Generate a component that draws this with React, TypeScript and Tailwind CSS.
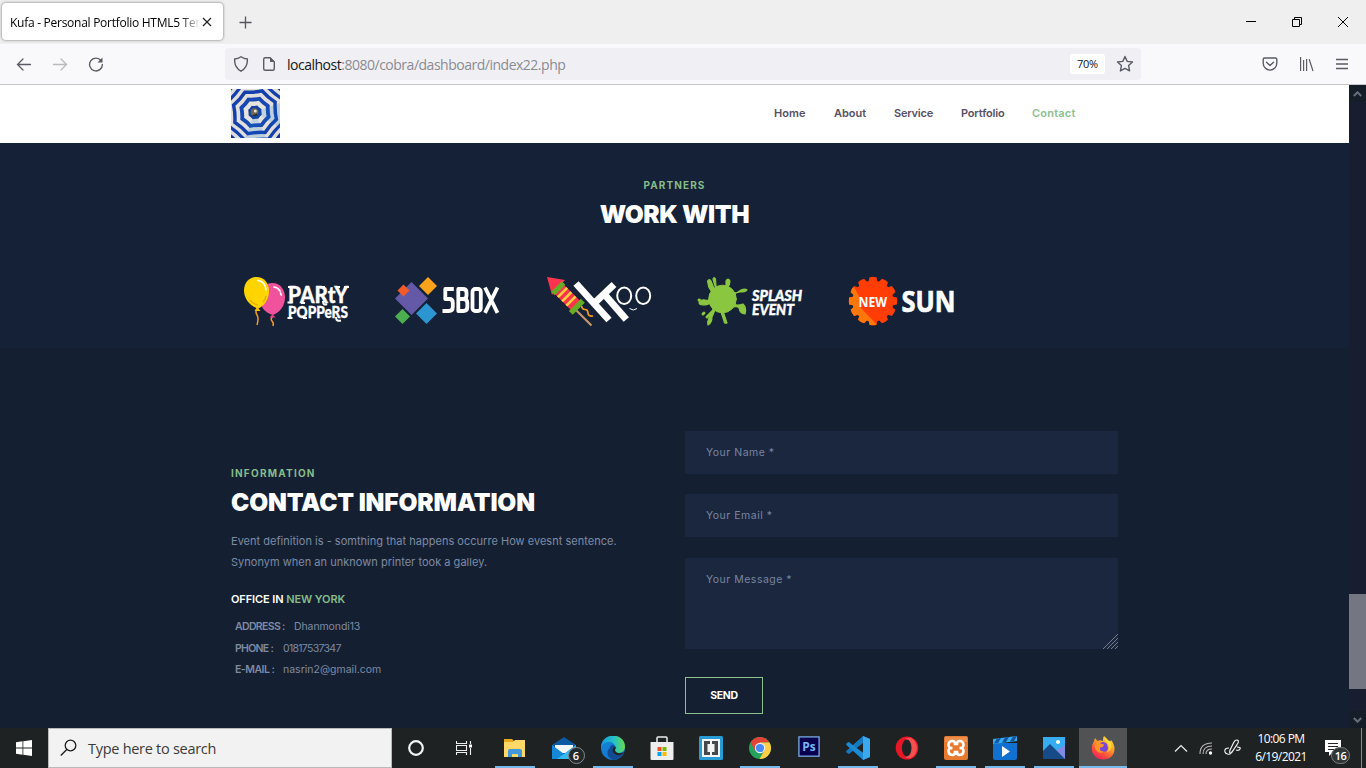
import React from "react";

const SEGOE = "font-['Open_Sans','Noto_Sans',sans-serif]";
const range = (n: number) => Array.from({ length: n }, (_, i) => i);

function Umbrella() {
  const ring = (r: number) => {
    const pts = range(8).map((i) => {
      const a = (i * Math.PI) / 4 + 0.32;
      return [24 + r * Math.cos(a), 23.3 + r * Math.sin(a)];
    });
    let d = `M${pts[0][0]} ${pts[0][1]}`;
    range(8).forEach((i) => {
      const a = ((i + 0.5) * Math.PI) / 4 + 0.32;
      const n = pts[(i + 1) % 8];
      d += `Q${24 + r * 0.87 * Math.cos(a)} ${23.3 + r * 0.87 * Math.sin(a)} ${n[0]} ${n[1]}`;
    });
    return d + "Z";
  };
  const rings: [number, string][] = [
    [36, "#dddddd"], [32, "#1440ae"], [28.3, "#e0dfdc"], [24.5, "#1440ae"], [20.6, "#e2e0dc"],
    [16.5, "#1749b4"], [12.2, "#e6e4df"], [7.2, "#16419c"],
  ];
  return (
    <svg width="49" height="49" viewBox="0 0 49 49" className="mb-[2px] block">
      <rect width="49" height="49" fill="#12369f" />
      {rings.map(([r, c], i) => (
        <path key={i} d={ring(r)} fill={c} />
      ))}
      <path d="M24 23L49 14V39ZM24 23L35 49H14Z" fill="#0879dc" opacity=".16" />
      <circle cx="23.5" cy="23" r="3.8" fill="#6d6857" />
      <circle cx="24.3" cy="22" r="1.5" fill="#eee4c8" />
      <path d="M22 26q2 1 4-1" stroke="#29241e" strokeWidth="1.3" fill="none" />
    </svg>
  );
}

function PartyLogo() {
  return (
    <svg width="108" height="50" viewBox="0 0 108 50" className="overflow-visible">
      <path d="M13 31q-2 4 0 7t0 10M29 39q-3 3-1 5t1 5" fill="none" stroke="#f79a1c" strokeWidth="1.5" />
      <path d="M28.500 6c7 0 12.500 6 12.500 14.500 0 8-5 15-12 17.500-8-2-13-8-13-17C16 12 21 6 28.500 6Z" fill="#f0529c" />
      <path d="m28.500 37-3 3.500h6z" fill="#e33b8b" />
      <path d="M12.500 0C20 0 25 6 25 14c0 9-5 15-11 17.500C6 29 0 22 0 13.500 0 6 5 0 12.500 0Z" fill="#ffd400" />
      <path d="m13.500 30-3 4h6z" fill="#f4b900" />
      <path d="M6 23q3 4 8 5M19 25q2-2 3-6" stroke="#e9ae00" strokeWidth="1.3" fill="none" />
      <path d="M14 3.500q5 .5 7 5.500M21.500 10.500l.5 2M30 10q4 .5 6 4M36.500 16l.7 2" stroke="#fff" strokeWidth="1.7" fill="none" strokeLinecap="round" />
      <g fill="#fff" stroke="#fff" strokeWidth=".3" fontFamily="Lato, sans-serif" fontWeight="900">
        <text x="44" y="25.500" fontSize="22" textLength="60" lengthAdjust="spacingAndGlyphs">PARtY</text>
        <text x="44" y="41" fontSize="16" textLength="60" lengthAdjust="spacingAndGlyphs">POPPeRS</text>
        <path d="M44 10h4M43.500 25.500h5M57 26h4M76 10h5M92 10h4M100 10h5M43.500 41h5M59 41h4" fill="none" strokeWidth="1.800" />
        <path d="M79 24q0 5 4 3M92 40q0 5 5 3.500" fill="none" strokeWidth="2" />
      </g>
    </svg>
  );
}

function BoxLogo() {
  return (
    <svg width="106" height="50" viewBox="0 0 106 50">
      <path d="M16.500 5 33 21.500 16.500 38 0 21.500Z" fill="#6459a6" />
      <path d="m8.500 7.500 6 6-6 6-6-6Z" fill="#f15a29" />
      <path d="m33 0 9 9-9 9-9-9Z" fill="#faa21b" />
      <path d="m7.500 32 7.500 7.500L7.500 47 0 39.500Z" fill="#4bae4f" />
      <path d="m31.500 26 10.500 10.500L31.500 47 21 36.500Z" fill="#2b96d1" />
      <g fill="none" stroke="#fff" strokeWidth="3.8" strokeLinejoin="round">
        <path d="M58.800 12h-8.500v10h4q3.500 0 3.500 4v4q0 4-4 4h-6.300" />
        <path d="M63.300 12h4.500q3.700 0 3.700 3.500v3q0 3.500-3.700 3.500h-4.500V12v22h5q4 0 4-4v-4q0-4-4-4" />
        <rect x="77.500" y="12" width="8.300" height="22" rx="2.700" />
        <path d="m90 10.500 12.500 25.300M102.500 10.500 90 35.800" />
      </g>
    </svg>
  );
}

function RocketLogo() {
  return (
    <svg width="106" height="50" viewBox="0 0 106 50">
      <path d="m29 33 15.500 15.500" stroke="#c2966a" strokeWidth="2.2" />
      <path d="M0 0 18 3 5 18Z" fill="#ff334d" />
      <g transform="translate(9.500 9.500) rotate(45)">
        <rect y="-6.500" width="30" height="13" fill="#ff334d" />
        <rect y="-7.500" width="5" height="15" fill="#65ad24" />
        <rect x="26" y="-8.500" width="5.500" height="17" fill="#65ad24" />
        <path d="M8.500-6.500v13M14.500-6.500v13M20.500-6.500v13" stroke="#ffd43a" strokeWidth="2.600" />
      </g>
      <g fill="none" stroke="#fff" strokeWidth="7">
        <path d="M29 6.500 62 43" />
        <path d="M67 7.500 47.500 26" />
        <path d="M58 18 79.300 42.500" />
      </g>
      <path d="M34.500 29q.5 3.500 3.500 3.500t3 3.500 5 3" stroke="#f39a1e" strokeWidth="1.700" fill="none" />
      <g fill="none" stroke="#fff">
        <ellipse cx="77.200" cy="18.800" rx="7" ry="8.300" strokeWidth="2" />
        <ellipse cx="96.200" cy="18.800" rx="7" ry="8.300" strokeWidth="2" />
        <path d="M82.500 31.500q4 3 7.500 0" strokeWidth="1" />
      </g>
    </svg>
  );
}

function SplashLogo() {
  return (
    <svg width="108" height="50" viewBox="0 0 108 50" className="overflow-visible">
      <g fill="#8ac640" stroke="#8ac640" strokeLinecap="round" strokeLinejoin="round">
        <circle cx="24.500" cy="22" r="13.800" />
        <path d="M13 14q-3-4-3.500-10 2-3 3.500 0l4 10ZM17 9 15 2q1-3 2.500 0l.5 8ZM28 11l0-7q2-4 4 0 0 4-3 8ZM36 16q4 0 7-3 4-2 6 0-2 2-7 2-4 0-6 3ZM36 27q3 2 9 0 4 4 2 10-5 0-6-6-1-2-6-1ZM25 34l4 12q-3 1-3-2l-3-9ZM17 33l-3 7q0 6-4 8-1-3 1-7l4-9ZM13 25q-3 3-8 3-4 0-4-3 3-3 6-2 3 1 6-1Z" strokeWidth="1.200" />
        <path d="m14 35-5 5M1 23h.5M6 36l-1 1" strokeWidth="3" />
      </g>
      <g fill="#fff" stroke="#fff" strokeWidth=".4" fontFamily="Lato, sans-serif" fontWeight="900" fontStyle="italic">
        <text x="54" y="23.500" fontSize="14.500" textLength="50" lengthAdjust="spacingAndGlyphs">SPLASH</text>
        <text x="54" y="38" fontSize="15" textLength="42" lengthAdjust="spacingAndGlyphs">EVENT</text>
      </g>
    </svg>
  );
}

function SunLogo() {
  const c = 24;
  const teeth = (
    <>
      <circle cx={c} cy={c} r="20.500" />
      {range(12).map((i) => (
        <path key={i} transform={`rotate(${i * 30} ${c} ${c})`} d="M19.500 5 20.500 .2Q24-.8 27.500 .2L28.500 5Z" />
      ))}
    </>
  );
  return (
    <svg width="108" height="50" viewBox="0 0 108 50" className="overflow-visible">
      <defs>
        <clipPath id="gear-shadow"><path d="M0 8 4 9 10 19V29L28 48V50H0Z" /></clipPath>
      </defs>
      <g fill="#ff3d05">{teeth}</g>
      <g fill="#ff7708" clipPath="url(#gear-shadow)">{teeth}</g>
      <text x="9.500" y="29.500" fill="#fff" fontFamily="Open Sans, sans-serif" fontWeight="700" fontSize="14.500" textLength="28.500" lengthAdjust="spacingAndGlyphs">NEW</text>
      <text x="52.500" y="34.500" fill="#fff" stroke="#fff" strokeWidth=".7" fontFamily="Open Sans, sans-serif" fontWeight="700" fontSize="28.500" textLength="54" lengthAdjust="spacingAndGlyphs">SUN</text>
    </svg>
  );
}

const Ico = ({ children, w = 24, className = "" }: { children: React.ReactNode; w?: number; className?: string }) => (
  <svg width={w} height={w} viewBox="0 0 24 24" fill="none" className={`block shrink-0 ${className}`}>
    {children}
  </svg>
);

function BrowserChrome() {
  return (
    <div className={`${SEGOE} shrink-0`}>
      <div className="flex h-11 items-start bg-[#efefef]">
        <div className="ml-0.5 mt-[3px] flex h-[37px] w-[221px] items-center rounded-[4px] bg-white pl-2 shadow-[0_0_3px_rgba(0,0,0,0.55)]">
          <span className="w-[190px] overflow-hidden whitespace-nowrap bg-linear-to-r from-black from-88% to-[#ffffff] bg-clip-text pt-[2px] text-[12px] tracking-[-0.27px] text-transparent">
            Kufa - Personal Portfolio HTML5 Template
          </span>
          <svg width="12" height="12" viewBox="0 0 12 12" className="ml-[1px]" stroke="#222" strokeWidth="1.2"><path d="m2 2 8 8m0-8-8 8" /></svg>
        </div>
        <svg width="14" height="14" viewBox="0 0 14 14" className="ml-[15px] mt-[15px]" stroke="#55555c" strokeWidth="1.3"><path d="M7.500 1.500v12M1.500 7.500h12" /></svg>
        <div className="ml-auto mr-[17px] mt-[16px] flex gap-[34px]">
          <svg width="12" height="12" viewBox="0 0 12 12" stroke="#000"><path d="M1 5.500h10" /></svg>
          <svg width="12" height="12" viewBox="0 0 12 12" stroke="#000" fill="none"><path d="M1.500 3.500h7v7h-7zM3.500 3.500v-2h7v7h-2" /></svg>
          <svg width="12" height="12" viewBox="0 0 12 12" stroke="#000"><path d="m1 1 10 10M11 1 1 11" /></svg>
        </div>
      </div>
      <div className="flex h-[41px] items-center border-b border-[#c6c6ca] bg-[#f9f9fb] text-[#5b5b66]">
        <svg width="16" height="16" viewBox="0 0 16 16" className="ml-4" fill="none" stroke="#5b5b66" strokeWidth="1.3" strokeLinecap="round"><path d="M14.500 8.500H1.500m5.500-5.500L1.500 8.500 7 14" /></svg>
        <svg width="16" height="16" viewBox="0 0 16 16" className="ml-5" fill="none" stroke="#b9b9bf" strokeWidth="1.3" strokeLinecap="round"><path d="M1.500 8.500h13m-5.500-5.500L14.500 8.500 9 14" /></svg>
        <svg width="16" height="16" viewBox="0 0 16 16" className="ml-5" fill="none" stroke="#5b5b66" strokeWidth="1.4"><path d="M13 4.500a6.400 6.400 0 1 0 1.400 4" strokeLinecap="round" /><path d="M14.500 1.500v5h-5Z" fill="#5b5b66" stroke="none" /></svg>
        <div className="ml-[121px] flex h-8 w-[916px] items-center rounded-[4px] bg-[#f0f0f4]">
          <svg width="16" height="16" viewBox="0 0 16 16" className="ml-2" fill="none" stroke="#5b5b66" strokeWidth="1.400"><path d="M8 .8Q11 3 14.300 3 15 11 8 15.200 1 11 1.700 3 5 3 8 .8Z" /></svg>
          <svg width="14" height="16" viewBox="0 0 14 16" className="ml-[13px]" fill="none" stroke="#5b5b66" strokeWidth="1.400"><path d="M8 1.700H3.200Q1.700 1.700 1.700 3.200v9.600q0 1.500 1.500 1.500h7.600q1.500 0 1.500-1.500V6Z" /><path d="M8 1v5h5Z" fill="#5b5b66" stroke="none" /></svg>
          <span className="ml-[11px] pt-px text-[14px] tracking-[-0.49px] text-[#8b8b92]"><span className="text-[#15141a]">localhost</span>:8080/cobra/dashboard/index22.php</span>
          <span className="ml-auto flex h-5 w-[35px] items-center justify-center rounded-[3px] bg-white pt-px text-[11px] tracking-[-0.3px] text-[#15141a]">70%</span>
          <svg width="18" height="18" viewBox="0 0 18 18" className="ml-[11px] mr-[7px]" fill="none" stroke="#5b5b66" strokeWidth="1.400" strokeLinejoin="round"><path d="m9 1.500 2.200 4.900 5.300.6-3.900 3.600 1 5.300L9 13.300l-4.600 2.600 1-5.300L1.500 7l5.300-.6Z" /></svg>
        </div>
        <svg width="16" height="16" viewBox="0 0 16 16" className="ml-[121px]" fill="none" stroke="#5b5b66" strokeWidth="1.400" strokeLinecap="round" strokeLinejoin="round"><path d="M2.500 2h11q1.300 0 1.300 1.300v4a6.800 6.800 0 0 1-13.600 0v-4Q1.200 2 2.500 2ZM4.500 6.200 8 9.500l3.500-3.300" /></svg>
        <svg width="16" height="16" viewBox="0 0 16 16" className="ml-[21px]" stroke="#5b5b66" strokeWidth="1.200"><path d="M1.600 1v14M4.600 4v11M7.600 3v12M10.200 3.200 14 15" /></svg>
        <svg width="16" height="16" viewBox="0 0 16 16" className="ml-[19px]" stroke="#5b5b66" strokeWidth="1.300"><path d="M2 3.500h12M2 8h12M2 12.500h12" /></svg>
      </div>
    </div>
  );
}

const partners: [string, React.ReactNode][] = [
  ["w-[151px]", <PartyLogo />],
  ["w-[152px]", <BoxLogo />],
  ["w-[151px]", <RocketLogo />],
  ["w-[151px]", <SplashLogo />],
  ["w-[151px]", <SunLogo />],
];

function Page() {
  return (
    <div className="flex w-[1349px] flex-col bg-[#142032] font-['Inter',sans-serif]">
      <header className="flex h-[58px] shrink-0 items-center bg-white pl-[231px] text-[11px] font-semibold leading-none text-[#565064]">
        <Umbrella />
        <nav className="mb-[2px] ml-[494px] flex">
          <a className="w-[60px] tracking-[0.1px]">Home</a>
          <a className="w-[60px] tracking-[0px]">About</a>
          <a className="w-[67px] tracking-[-0.2px]">Service</a>
          <a className="w-[71px] tracking-[-0.17px]">Portfolio</a>
          <a className="tracking-[0.2px] text-[#8cc090]">Contact</a>
        </nav>
      </header>
      <section className="h-[205px] shrink-0 bg-[#152136] pt-[35px]">
        <p className="text-center text-[10px] font-bold leading-[14px] tracking-[1.1px] text-[#86bb8a]">PARTNERS</p>
        <h2 className="mt-[7px] text-center text-[24.5px] font-black leading-[30px] tracking-[-0.4px] text-white">WORK WITH</h2>
        <div className="ml-[244px] mt-[48px] flex">
          {partners.map(([w, logo], i) => (
            <div key={i} className={w}>{logo}</div>
          ))}
        </div>
      </section>
      <section className="flex flex-1 pl-[231px]">
        <div className="w-[454px] pt-[118px]">
          <p className="text-[10px] font-bold leading-[14px] tracking-[1.22px] text-[#86bb8a]">INFORMATION</p>
          <h2 className="mt-[7px] whitespace-nowrap text-[24.5px] font-black leading-[30px] tracking-[-0.17px] text-white">CONTACT INFORMATION</h2>
          <p className="mt-[14px] whitespace-nowrap text-[11px] leading-[21px] tracking-[0.02px] text-[#7e8aa2]">
            Event definition is - somthing that happens occurre How evesnt sentence.<br />
            Synonym when an unknown printer took a galley.
          </p>
          <h5 className="mt-[18px] text-[11px] font-semibold leading-[16px] tracking-[-0.1px] text-white">OFFICE IN <span className="text-[#86bb8a]">NEW YORK</span></h5>
          <ul className="ml-1 mt-[9px] text-[10.5px] leading-[21.5px] tracking-[-0.1px] text-[#7e8aa2]">
            <li className="flex"><b className="w-[59px] font-semibold tracking-[-0.65px]">ADDRESS :</b>Dhanmondi13</li>
            <li className="flex tracking-[-0.7px]"><b className="w-[48px] font-semibold">PHONE :</b>01817537347</li>
            <li className="flex tracking-[0px]"><b className="w-[48px] font-semibold tracking-[-0.5px]">E-MAIL :</b>nasrin2@gmail.com</li>
          </ul>
        </div>
        <form className="flex w-[433px] flex-col pt-[83px] text-[10.5px] tracking-[0.5px]">
          <input placeholder="Your Name *" className="h-[43px] bg-[#1a273e] px-[21px] text-white placeholder:text-[#7985a0]" />
          <input placeholder="Your Email *" className="mt-5 h-[43px] bg-[#1a273e] px-[21px] text-white placeholder:text-[#7985a0]" />
          <div className="relative mt-[21px] h-[91px]">
            <textarea placeholder="Your Message *" className="block h-full w-full resize-none bg-[#1a273e] px-[21px] py-[14px] leading-[16px] text-white placeholder:text-[#7985a0]" />
            <svg width="15" height="15" viewBox="0 0 15 15" className="absolute bottom-0 right-0" stroke="#8d929c" strokeWidth=".8"><path d="M0 15 15 0M4 15 15 4M8 15l7-7M12 15l3-3" /></svg>
          </div>
          <button type="button" className="mt-[28px] h-[37px] w-[78px] border border-[#8cc090] text-[10.5px] font-bold tracking-[-0.35px] text-white">SEND</button>
        </form>
      </section>
    </div>
  );
}

function ScrollBar() {
  return (
    <div className="flex w-[17px] flex-col items-center bg-[#181d30]">
      <div className="flex h-[17px] w-full items-center justify-center bg-[#151d29]"><svg width="9" height="6" viewBox="0 0 9 6" fill="none" stroke="#686e78" strokeWidth="2"><path d="m.8 5 3.700-3.700L8.200 5" /></svg></div>
      <div className="mt-[492px] h-[95px] w-full bg-[#747681]" />
      <div className="mt-auto flex h-[17px] w-full items-center justify-center bg-[#151d29]"><svg width="9" height="6" viewBox="0 0 9 6" fill="none" stroke="#686e78" strokeWidth="2"><path d="M.8 1 4.500 4.700 8.200 1" /></svg></div>
    </div>
  );
}

const Explorer = () => (
  <Ico><path d="M1 3h8l2 2h11v16H1Z" fill="#e9a91c" /><path d="M1 6h9l2-2h10v17H1Z" fill="#ffd867" /><path d="M5 21v-6q0-2 2-2h10q2 0 2 2v6h-4v-3H9v3Z" fill="#4398dc" /></Ico>
);
const Mail = () => (
  <div className="relative">
    <Ico><path d="M0 9 12 1l12 8v14H0Z" fill="#0c59a4" /><path d="M3 9h18v8H3Z" fill="#f2f6f9" /><path d="m0 9 12 9 12-9v14H0Z" fill="#1688d8" /><path d="m12 18 12-9v14H5Z" fill="#35b9f2" /></Ico>
    <span className="absolute -right-[9px] top-[11px] flex h-[17px] w-[17px] items-center justify-center rounded-full border border-[#858b8e] bg-[#22292d] text-[11px] font-semibold leading-none text-white">6</span>
  </div>
);
const Edge = () => (
  <Ico>
    <defs>
      <linearGradient id="edge-a" x2="1"><stop stopColor="#1598df" /><stop offset=".55" stopColor="#24c3c6" /><stop offset="1" stopColor="#6ad84a" /></linearGradient>
      <linearGradient id="edge-b" y2="1"><stop stopColor="#1686d8" /><stop offset="1" stopColor="#1170c6" /></linearGradient>
    </defs>
    <circle cx="12" cy="12" r="12" fill="url(#edge-b)" />
    <path d="M0 11C1-4 23-4 24 10c0 5-3 7-7 7-5 0-3-3-2-4C14 4 4 4 0 11Z" fill="url(#edge-a)" />
    <path d="M9 12c0-3 3-4 5-2-1 1-2 3-1 5 2 3 7 3 10 1-2 5-6 8-11 8-5-2-8-8-3-12Z" fill="#124b91" />
    <path d="M15 11q-3 4 2 6c4 1 7-1 7-3-2 7-10 6-12 2-1-3 1-6 3-5Z" fill="#202326" />
  </Ico>
);
const Store = () => (
  <Ico><path d="M7 6V2q0-1 1-1h8q1 0 1 1v4" stroke="#eee" strokeWidth="1.500" /><path d="M.5 6h23v17q0 1-1 1h-21q-1 0-1-1Z" fill="#eee" /><path d="M7.500 11h4v4h-4Z" fill="#f25022" /><path d="M12.500 11h4v4h-4Z" fill="#7fba00" /><path d="M7.500 16h4v4h-4Z" fill="#00a4ef" /><path d="M12.500 16h4v4h-4Z" fill="#ffb900" /></Ico>
);
const Brackets = () => (
  <Ico><rect width="24" height="24" rx="1.500" fill="#279bd4" /><rect x="3" y="3" width="18" height="18" fill="#f3f5f5" /><path d="M11 5H5v14h6v-3H8.500V8H11ZM13 5h6v14h-6v-3h2.500V8H13Z" fill="#45494b" /></Ico>
);
const Chrome = () => (
  <Ico><circle cx="12" cy="12" r="11" fill="#22a45d" /><path d="M2.500 6.500a11 11 0 0 1 19 0H12L7.200 15Z" fill="#e34337" /><path d="M12 6.500h9.500A11 11 0 0 1 11.500 23l5-8.500Z" fill="#fecf43" /><circle cx="12" cy="12" r="5.200" fill="#f2f2f2" /><circle cx="12" cy="12" r="4.100" fill="#4889f4" /></Ico>
);
const Photoshop = () => (
  <Ico w={22} className="mb-[3px]"><rect x="1" y="1" width="22" height="21" fill="#08004e" stroke="#7baeea" strokeWidth="1.400" /><text x="12" y="16" textAnchor="middle" fontSize="13" fontWeight="700" fontFamily="Open Sans, sans-serif" fill="#74b7f4">Ps</text></Ico>
);
const Code = () => (
  <Ico>
    <path d="M17 0 24 3v18l-7 3L.5 9q-.8-1 0-1.800L2.500 6 17 17V7L3 18 .5 16.500q-.8-1 0-1.800Z" fill="#1479c0" />
    <path d="M.5 9 2.500 6 18 17.500V24Z" fill="#1c8ad4" />
    <path d="m17 0 7 3v18l-7 3Z" fill="#3aa9ee" />
  </Ico>
);
const Opera = () => (
  <Ico><ellipse cx="12" cy="12" rx="11.300" ry="11.500" fill="#e81727" /><path d="M16 2a11.400 11.400 0 0 1 0 20q-4 1-6-1 6-1 6-9t-6-9q3-2 6-1Z" fill="#f55050" /><ellipse cx="11.700" cy="12" rx="4.800" ry="8.500" fill="#202326" /></Ico>
);
const Xampp = () => (
  <Ico><rect width="24" height="24" rx="2" fill="#e77a2f" /><path d="M1 1h22v5H1Z" fill="#f5a467" opacity=".5" /><path d="M8.500 12Q4 12 4.500 8.500t4-3.500Q11 5 11 8h2q0-3 2.500-3 3.500 0 4 3.500T15.500 12q4.500 0 4 3.500t-4 3.500q-2.500 0-2.500-3h-2q0 3-2.500 3-3.500 0-4-3.500T8.500 12Z" stroke="#fff" strokeWidth="2.600" /></Ico>
);
const Movies = () => (
  <Ico><path d="M0 7h24v15q0 2-2 2H2q-2 0-2-2Z" fill="#1271d0" /><path d="M0 3 24 0v5L0 8Z" fill="#37aaf1" /><path d="m4 2.500 4-.5-3 5-4 .5ZM12 1.500l4-.5-3 5-4 .5ZM20 .500l4-.5-3 5-4 .5Z" fill="#1156a1" /><path d="m9 10 8 5.500L9 21Z" fill="#fff" /></Ico>
);
const Photos = () => (
  <Ico><path d="M1 1h22v22H1Z" fill="#35adf0" /><path d="M13 15 23 9v14H13Z" fill="#818be2" /><path d="M1 15 8 8l15 15H1Z" fill="#174b88" /><circle cx="16" cy="6" r="2" fill="#fff" /></Ico>
);
const Firefox = () => (
  <Ico>
    <defs><linearGradient id="fox" x1=".8" y1="0" x2=".2" y2="1"><stop stopColor="#ffe13e" /><stop offset=".4" stopColor="#ff9b2c" /><stop offset=".75" stopColor="#ff463d" /><stop offset="1" stopColor="#ed1a70" /></linearGradient></defs>
    <path d="M13 0q4 3 5 6 2-1 2-2 3.500 4 3.500 9c0 6.500-5 10.500-11.500 10.500S.8 18.500.8 12.500q0-4 2-7L4 2l2.500 3Q9 3.500 12 5q-.5-3 1-5Z" fill="url(#fox)" />
    <path d="M8 8q4-4 8 0 3 8-4 8-5 0-5-5 4 1 5-1Z" fill="#7747d8" />
    <path d="M4.500 6q3-1 5 1.500l3.500 1q0 2.500-4 3-1 4 4 4c-4 3-9 0-9-5Z" fill="#ff9326" />
    <path d="M13.500 1q.5 4 3 6 3 5-.5 9.500 7-3.500 3-11.500-4-1-5.500-4Z" fill="#ffdb38" />
  </Ico>
);

const apps: [() => React.JSX.Element, boolean][] = [
  [Explorer, true], [Mail, false], [Edge, true], [Store, false], [Brackets, false], [Chrome, true], [Photoshop, false],
  [Code, true], [Opera, false], [Xampp, true], [Movies, true], [Photos, true],
];

function Taskbar() {
  return (
    <div className={`${SEGOE} flex h-10 shrink-0 bg-[#1f2222]`}>
      <div className="flex w-12 items-center justify-center">
        <svg width="16" height="16" viewBox="0 0 16 16" fill="#fff"><path d="M0 2.200 6.500 1.300v6.300H0ZM7.300 1.200 16 0v7.600H7.300ZM0 8.400h6.500v6.300L0 13.800ZM7.300 8.400H16V16l-8.700-1.200Z" /></svg>
      </div>
      <div className="flex w-[344px] items-center border border-[#b9b9b9] bg-[#f2f2f2] text-[#3a3a3a]">
        <svg width="18" height="18" viewBox="0 0 18 18" className="ml-[11px]" fill="none" stroke="#1c1c1c" strokeWidth="1.300"><circle cx="10.500" cy="6.500" r="5.300" /><path d="m6.800 10.500-6 6" /></svg>
        <span className="ml-[10px] pt-px text-[14.500px] tracking-[-0.28px]">Type here to search</span>
      </div>
      <div className="flex w-12 items-center justify-center"><svg width="18" height="18" viewBox="0 0 18 18" fill="none" stroke="#f4f4f4" strokeWidth="2.200"><circle cx="9" cy="9" r="6.800" /></svg></div>
      <div className="flex w-[50px] items-center pl-4"><svg width="17" height="16" viewBox="0 0 17 16" fill="none" stroke="#eee" strokeWidth="1.100"><path d="M.5 1v2.500h10V1M.5 15v-2.500h10V15M.5 5.500h10v5H.5ZM14.500 1v3M14.500 8v7" /><path d="M13 4.500h3v3h-3Z" fill="#fff" stroke="none" /></svg></div>
      {apps.map(([A, on], i) => (
        <div key={i} className="flex w-[49px] flex-col items-center">
          <div className="flex h-[37px] items-center pt-[3px]"><A /></div>
          {on && <div className="mt-px h-0.5 w-10 bg-[#76b9ed]" />}
        </div>
      ))}
      <div className="ml-px flex w-12 flex-col items-center bg-[#515254]">
        <div className="flex h-[38px] items-center pt-px"><Firefox /></div>
        <div className="h-0.5 w-full bg-[#76b9ed]" />
      </div>
      <div className="ml-[47px] flex items-center text-white">
        <svg width="14" height="9" viewBox="0 0 14 9" fill="none" stroke="#eee" strokeWidth="1.200"><path d="m1 7.500 6-6 6 6" /></svg>
        <svg width="15" height="15" viewBox="0 0 15 15" className="ml-[11px]" fill="none" stroke="#bbb" strokeWidth="1.100"><path d="M1 13Q1 2 13 2M4 13q0-8 9-8M7 13q0-5 6-5" /><circle cx="11.500" cy="12" r="1.700" fill="#fff" stroke="none" /></svg>
        <svg width="18" height="18" viewBox="0 0 18 18" className="ml-[10px]" fill="none" stroke="#eee" strokeWidth="1.200"><path d="M5 9q-5 0-4 4 1 3 5 2l2-2 6-9q1-3-1-3t-3 2l-4 8q-1 4 1 3l6-8M13 8q4 0 3 2t-4 1" /></svg>
      </div>
      <div className="ml-[12px] w-[54px] pt-[2px] text-center text-[12px] leading-[17.5px] tracking-[-0.6px] text-white">
        <div>10:06 PM</div><div>6/19/2021</div>
      </div>
      <div className="relative ml-[17px] mt-[12px] h-6 w-[26px]">
        <svg width="17" height="17" viewBox="0 0 17 17"><path d="M0 0h16v12H8l-4 4v-4H0Z" fill="#fff" /><path d="M3 3.500h10M3 6.500h10M3 9.500h7" stroke="#252828" /></svg>
        <span className="absolute left-[6px] top-[7px] flex h-[17px] w-[19px] items-center justify-center rounded-full border border-[#777c7d] bg-[#303535] text-[11px] font-semibold leading-none tracking-[-0.5px] text-white">16</span>
      </div>
      <div className="ml-auto mr-1 w-px bg-[#888b8b]" />
    </div>
  );
}

export default function App() {
  return (
    <div className="flex h-[768px] w-[1366px] flex-col overflow-hidden">
      <BrowserChrome />
      <main className="flex min-h-0 flex-1"><Page /><ScrollBar /></main>
      <Taskbar />
    </div>
  );
}
